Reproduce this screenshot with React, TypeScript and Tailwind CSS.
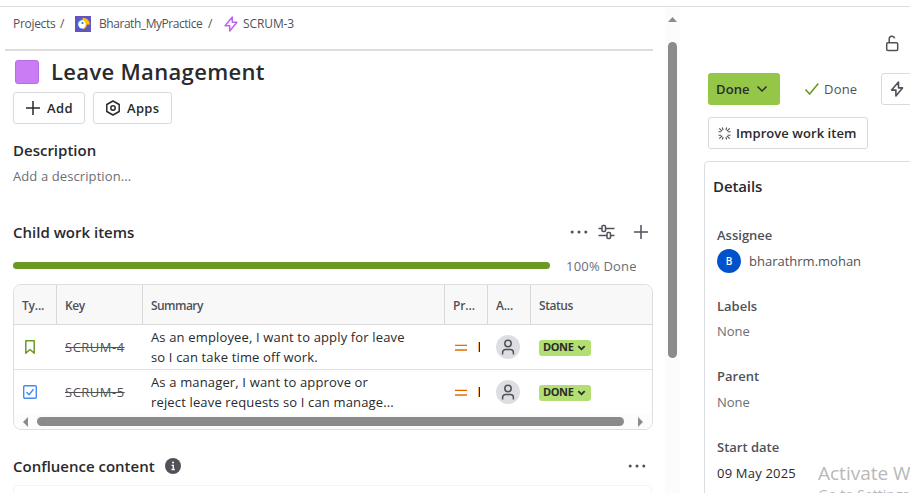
import React from "react";

const columns = "grid grid-cols-[43px_86px_302px_43px_43px_1fr]";

function Plus() {
  return (
    <svg width="16" height="16" viewBox="0 0 16 16" fill="none" stroke="currentColor" strokeWidth="1.5" className="shrink-0">
      <path d="M8 1v14M1 8h14" />
    </svg>
  );
}

function Dots() {
  return (
    <svg width="18" height="4" viewBox="0 0 18 4" fill="currentColor" className="shrink-0">
      <circle cx="2.200" cy="2" r="1.5" />
      <circle cx="9" cy="2" r="1.5" />
      <circle cx="15.800" cy="2" r="1.5" />
    </svg>
  );
}

function ProjectIcon() {
  return (
    <svg width="16" height="16" viewBox="0 0 16 16" className="ml-[10px] shrink-0">
      <rect width="16" height="16" fill="#6554c0" />
      <path d="M8 2.500a5.300 5.300 0 0 0 0 10.800z" fill="#2684ff" />
      <path d="M7.500 1.800c4.500 0 7.300 3 7.300 6.700H12c-.3 2-1.500 4-3.500 4.800z" fill="#ffc400" />
      <path d="M8.500 4.200H7.300a3.900 3.900 0 0 0 0 8.300h1.500l1.700-3.300V7z" fill="#fff" />
      <circle cx="7.500" cy="7" r="1.100" fill="#2f6bc9" />
    </svg>
  );
}

function EpicBolt() {
  return (
    <svg width="14" height="16" viewBox="0 0 14 16" fill="none" stroke="#bf63f3" strokeWidth="1.5" strokeLinejoin="round" className="ml-[11px] shrink-0">
      <path d="M8.300 1v5.200h4.600L5.700 15V9.800H1.100z" />
    </svg>
  );
}

function HeadCell({ children, last }: { children: React.ReactNode; last?: boolean }) {
  return (
    <div className={`flex items-center pl-2 pt-[2px] ${last ? "" : "border-r border-[#d8d8d9]"}`}>{children}</div>
  );
}

function StatusBadge() {
  return (
    <div className="flex h-4 w-[52px] items-center rounded-[3px] bg-[#b3df72] pl-[4px] text-[11px] font-bold text-[#292a2e]">
      <span className="w-[34px] tracking-[-0.400px]">DONE</span>
      <svg width="9" height="6" viewBox="0 0 9 6" fill="none" stroke="currentColor" strokeWidth="1.800">
        <path d="M1.300 1.200 4.500 4.300 7.700 1.200" />
      </svg>
    </div>
  );
}

function ItemRow({ icon, id, lines, first }: { icon: React.ReactNode; id: string; lines: string[]; first?: boolean }) {
  return (
    <div className={`${columns} ${first ? "h-[45px] border-b border-[#e2e2e3]" : "h-[44px]"}`}>
      <div className="flex items-center pl-[9px]">{icon}</div>
      <div className="flex items-center pl-2 pt-px text-[13px] tracking-[0.500px] text-[#505258]">
        <span className="line-through">{id}</span>
      </div>
      <div className="flex flex-col justify-center pl-2 text-[13px] leading-5 tracking-[0.150px] whitespace-nowrap">
        {lines.map((l) => (
          <div key={l}>{l}</div>
        ))}
      </div>
      <div className="flex items-center pl-[10px]">
        <div className="flex w-3 flex-col gap-[3px]">
          <div className="h-[2px] border-t border-[#f6d5b6] bg-[#e06c00]" />
          <div className="h-[2px] bg-[#e8913f]" />
        </div>
        <div className="ml-[11px] h-[10px] w-[2px] border-l border-[#f0b070] bg-[#292a4e]" />
      </div>
      <div className="flex items-center pl-2">
        <div className="flex size-6 items-center justify-center rounded-full bg-[#dddee1] text-[#505258]">
          <svg width="14" height="16" viewBox="0 0 14 16" fill="none" stroke="currentColor" strokeWidth="1.500">
            <circle cx="7" cy="4.500" r="3.200" />
            <path d="M1.600 15.500v-2a3 3 0 0 1 3-3h4.800a3 3 0 0 1 3 3v2" />
          </svg>
        </div>
      </div>
      <div className="flex items-center pl-2 pt-px">
        <StatusBadge />
      </div>
    </div>
  );
}

function Field({ label, children }: { label: string; children: React.ReactNode }) {
  return (
    <div className="h-[70.500px] pl-3">
      <div className="h-5 text-[13px] leading-5 font-semibold text-[#505258]">{label}</div>
      <div className="flex h-[33px] items-center text-[13px] text-[#6b6e76]">{children}</div>
    </div>
  );
}

export default function App() {
  return (
    <div className="flex h-[493px] w-[910px] flex-col overflow-hidden bg-white pt-[6px] font-['Open_Sans','Noto_Sans',sans-serif] text-[#292a2e]">
      <div className="h-px shrink-0 bg-[#dddee1]" />
      <div className="flex min-h-0 flex-1">
        <main className="h-[486px] w-[665px] shrink-0 overflow-hidden pl-[13px] whitespace-nowrap">
          <nav className="flex h-[34px] items-center text-[12px] text-[#505258]">
            <span className="w-[42px] tracking-[-0.300px]">Projects</span>
            <span className="ml-[5px] w-[5px]">/</span>
            <ProjectIcon />
            <span className="ml-2 w-[104px] tracking-[-0.450px]">Bharath_MyPractice</span>
            <span className="ml-[5px] w-[5px]">/</span>
            <EpicBolt />
            <span className="ml-[5px] tracking-[-0.100px]">SCRUM-3</span>
          </nav>
          <div className="mt-2 -ml-2 h-[2px] w-[648px] bg-[#dddddd]" />
          <div className="flex h-[41px] items-center pl-[2px]">
            <div className="size-6 rounded-[3px] border border-[#b56de0] bg-[#c97cf4]" />
            <h1 className="ml-3 text-[22px] font-semibold tracking-[0.330px]">Leave Management</h1>
          </div>
          <div className="flex gap-2 text-[13px] font-semibold">
            <button className="flex h-8 w-[72px] items-center rounded-[3px] border border-[#d9dade] pl-[11px]">
              <Plus />
              <span className="ml-[6px] pt-px tracking-[0.400px]">Add</span>
            </button>
            <button className="flex h-8 w-[79px] items-center rounded-[3px] border border-[#d9dade] pl-[11px]">
              <svg width="16" height="16" viewBox="0 0 16 16" fill="none" stroke="currentColor" strokeWidth="1.500" strokeLinejoin="round">
                <path d="M8 1 14.200 4.500v7L8 15 1.800 11.500v-7z" />
                <circle cx="8" cy="8" r="2.200" />
              </svg>
              <span className="ml-[6px] pt-px tracking-[0.300px]">Apps</span>
            </button>
          </div>
          <h2 className="mt-[15px] h-[22px] text-[15px] leading-[22px] font-semibold">Description</h2>
          <p className="mt-[5px] h-5 text-[13px] leading-5 tracking-[0.100px] text-[#6b6e76]">Add a description...</p>
          <div className="mt-[34px] flex h-6 items-center text-[#505258]">
            <h2 className="w-[557px] text-[15px] font-semibold text-[#292a2e]">Child work items</h2>
            <Dots />
            <svg width="17" height="16" viewBox="0 0 17 16" fill="none" stroke="currentColor" strokeWidth="1.500" className="ml-[10px]">
              <path d="M.5 4.500h3.500M7.500 4.500h9M.5 11.500H9M12.500 11.500h4" />
              <rect x="4" y="1.500" width="3.500" height="6" rx="1" />
              <rect x="9" y="8.500" width="3.500" height="6" rx="1" />
            </svg>
            <span className="ml-[18px]"><Plus /></span>
          </div>
          <div className="mt-[12px] flex h-5 items-center">
            <div className="-mt-px h-[7px] w-[537px] rounded-full bg-[#6a9a23]" />
            <span className="ml-4 pt-[2px] text-[13px] tracking-[0.200px] text-[#6b6e76]">100% Done</span>
          </div>
          <section className="mt-2 h-[146px] w-[640px] overflow-hidden rounded-[8px] border border-[#dddee1]">
            <div className={`${columns} h-[40px] border-b border-[#d8d8d9] bg-[#f8f8f8] text-[12px] font-semibold tracking-[-0.450px] text-[#505258]`}>
              <HeadCell><span className="tracking-[-0.200px]">Ty...</span></HeadCell>
              <HeadCell>Key</HeadCell>
              <HeadCell><span className="tracking-[-0.550px]">Summary</span></HeadCell>
              <HeadCell><span className="tracking-[-0.100px]">Pr...</span></HeadCell>
              <HeadCell><span className="tracking-[-0.200px]">A...</span></HeadCell>
              <HeadCell last>Status</HeadCell>
            </div>
            <ItemRow
              first
              id="SCRUM-4"
              lines={["As an employee, I want to apply for leave", "so I can take time off work."]}
              icon={
                <svg width="14" height="16" viewBox="0 0 14 16" fill="none" stroke="#6a9a23" strokeWidth="1.500" strokeLinejoin="round">
                  <path d="M2.800 1.800h8.400v12.400L7 10.500l-4.200 3.700z" />
                </svg>
              }
            />
            <ItemRow
              id="SCRUM-5"
              lines={["As a manager, I want to approve or", "reject leave requests so I can manage..."]}
              icon={
                <svg width="14" height="14" viewBox="0 0 14 14" fill="none" stroke="#4688ec" strokeWidth="1.400" strokeLinejoin="round">
                  <rect x=".7" y=".7" width="12.600" height="12.600" rx="1.200" />
                  <path d="M3.500 7 6 9.800l4.500-5.500" />
                </svg>
              }
            />
            <div className="flex h-[15px] items-center bg-[#fcfcfc] pl-[9px]">
              <svg width="5" height="10" viewBox="0 0 5 10" fill="#8b8b8b"><path d="M5 0v10L0 5z" /></svg>
              <div className="ml-[9px] h-[9px] w-[587px] rounded-full bg-[#8b8b8b]" />
              <svg width="5" height="10" viewBox="0 0 5 10" fill="#8b8b8b" className="ml-[14px]"><path d="M0 0v10l5-5z" /></svg>
            </div>
          </section>
          <div className="mt-[25px] flex h-[22px] items-center text-[#505258]">
            <h2 className="w-[152px] text-[15px] font-semibold text-[#292a2e]">Confluence content</h2>
            <svg width="16" height="16" viewBox="0 0 16 16">
              <circle cx="8" cy="8" r="8" fill="#505258" />
              <path d="M6.500 7.300h1.800v4.200M6.500 11.500h3.300" fill="none" stroke="#fff" strokeWidth="1.300" />
              <circle cx="8" cy="4.500" r="1" fill="#fff" />
            </svg>
            <span className="ml-[447px]"><Dots /></span>
          </div>
          <div className="mt-[8px] h-8 w-[639px] rounded-[4px] border border-[#f5f5f5]" />
        </main>

        <div className="flex w-[15px] shrink-0 flex-col items-center bg-[#fcfcfc] pt-[10px]">
          <svg width="9" height="5" viewBox="0 0 9 5" fill="#8b8b8b"><path d="M4.500 0 9 5H0z" /></svg>
          <div className="mt-[20px] h-[316px] w-[9px] rounded-full bg-[#8b8b8b]" />
        </div>

        <aside className="h-[486px] w-[230px] shrink-0 overflow-hidden pl-6 whitespace-nowrap">
          <div className="flex h-[66px] items-start pt-[28px] pl-[181px] text-[#505258]">
            <svg width="14" height="17" viewBox="0 0 14 17" fill="none" stroke="currentColor" strokeWidth="1.500">
              <rect x="1.700" y="7.800" width="11" height="7.700" rx="1.200" />
              <path d="M4.200 7.800V4a2.800 2.800 0 0 1 5.500-.600" />
            </svg>
          </div>
          <div className="flex pl-1">
            <button className="flex h-8 w-[72px] shrink-0 items-center rounded-[3px] bg-[#94c748] pl-2 text-left text-[13px] font-semibold">
              <span className="w-[40px] pt-px tracking-[0.100px]">Done</span>
              <svg width="12" height="8" viewBox="0 0 12 8" fill="none" stroke="currentColor" strokeWidth="1.500"><path d="M1.500 1.500 6 6l4.500-4.500" /></svg>
            </button>
            <div className="ml-6 flex h-8 w-[77px] shrink-0 items-center text-[13px] text-[#505258]">
              <svg width="16" height="14" viewBox="0 0 16 14" fill="none" stroke="#6a9a23" strokeWidth="1.600"><path d="M1.500 7.500 5.600 12 14.300 1.500" /></svg>
              <span className="ml-1 pt-px tracking-[0.200px]">Done</span>
            </div>
            <button className="flex h-8 w-10 shrink-0 items-center rounded-[3px] border border-[#d9dade] pl-[8px] text-[#505258]">
              <svg width="14" height="16" viewBox="0 0 14 16" fill="none" stroke="currentColor" strokeWidth="1.600" strokeLinejoin="round">
                <path d="M8.500 1v5.900h4L5.900 15V9.100H1.600z" />
              </svg>
            </button>
          </div>
          <button className="mt-3 ml-1 flex h-8 w-[160px] items-center rounded-[3px] border border-[#d9dade] pl-[9px] text-[13px] font-semibold">
            <svg width="13" height="13" viewBox="0 0 13 13" fill="none" stroke="#505258" strokeWidth="1.100">
              <path d="M4.300.5l.8 2.500M8.700.5l-.8 2.500M4.300 12.500l.8-2.500M8.700 12.500l-.8-2.500M.5 4.800h2.700M.5 8.200h2.700M12.500 4.800H9.800M12.500 8.200H9.800M1.300 1.300l2.800 2.800M11.700 1.300 8.900 4.100M1.300 11.700l2.800-2.800M11.700 11.700 8.900 8.900" />
            </svg>
            <span className="ml-[5px] pt-px tracking-[0.060px]">Improve work item</span>
          </button>
          <section className="relative mt-3 h-[360px] w-[240px] rounded-[4px] border border-[#dddee1]">
            <h2 className="mt-[12px] mb-[27px] h-6 pl-2 text-[15px] leading-6 font-semibold tracking-[-0.100px]">Details</h2>
            <Field label="Assignee">
              <span className="-mt-px flex size-6 items-center justify-center rounded-full bg-[#0052cc] text-[10px] font-semibold text-white">B</span>
              <span className="ml-2 text-[#505258]">bharathrm.mohan</span>
            </Field>
            <Field label="Labels">None</Field>
            <Field label="Parent">None</Field>
            <Field label="Start date"><span className="pt-[2px] tracking-[0.200px] text-[#292a2e]">09 May 2025</span></Field>
            <div className="absolute top-[299px] left-[113px] text-[#b8b8b8]">
              <div className="text-[19px] leading-[25px]">Activate Windows</div>
              <div className="text-[14px] leading-[18px]">Go to Settings</div>
            </div>
          </section>
        </aside>
      </div>
    </div>
  );
}
